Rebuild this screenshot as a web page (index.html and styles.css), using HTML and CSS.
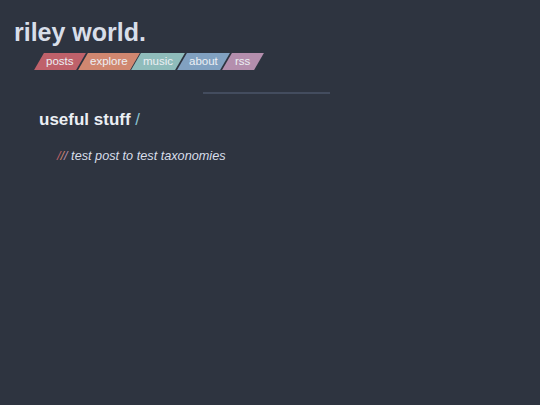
FILE: index.html
```html
<!DOCTYPE html>
<html>
<head>
<meta charset="utf-8">
<link rel="stylesheet" href="styles.css">
</head>
<body>
<header class="header">
  <h1 class="title">riley world.</h1>
  <nav class="nav">
    <a class="tab tab-red"><span class="tab-label">posts</span></a>
    <a class="tab tab-orange"><span class="tab-label">explore</span></a>
    <a class="tab tab-teal"><span class="tab-label">music</span></a>
    <a class="tab tab-blue"><span class="tab-label">about</span></a>
    <a class="tab tab-purple"><span class="tab-label">rss</span></a>
  </nav>
</header>
<main class="main">
  <hr class="rule">
  <h2 class="section">useful stuff <span class="slash">/</span></h2>
  <ul class="posts">
    <li class="post"><span class="s1">/</span><span class="s2">/</span><span class="s3">/</span> test post to test taxonomies</li>
  </ul>
</main>
</body>
</html>
```
FILE: styles.css
```css
html, body {
  margin: 0;
  padding: 0;
  background: #2e3440;
  color: #d8dee9;
  font-family: "Liberation Sans", Arial, sans-serif;
  height: 100%;
}
.header {
  padding: 18px 0 0 14px;
}
.title {
  margin: 0;
  font-size: 25px;
  line-height: 28px;
  font-weight: bold;
  color: #d8dee9;
}
.nav {
  display: flex;
  margin: 7px 0 0 25px;
  gap: 2px;
}
.tab {
  display: block;
  height: 17px;
  line-height: 17px;
  font-size: 11.5px;
  color: #eceff4;
  padding: 0 7px;
  transform: skewX(-30deg);
}
.tab-label {
  display: inline-block;
  transform: skewX(30deg);
}
.tab-red { background: #bf616a; }
.tab-orange { background: #d08770; }
.tab-teal { background: #8fbcbb; }
.tab-blue { background: #81a1c1; }
.tab-purple { background: #b48ead; padding: 0 9px 0 8px; }
.main {
  padding: 0 0 0 39px;
}
.rule {
  width: 127px;
  margin: 22px 0 0 164px;
  border: 0;
  height: 2px;
  background: #434c5e;
}
.section {
  margin: 16px 0 0 0;
  font-size: 17px;
  line-height: 20px;
  font-weight: bold;
  color: #eceff4;
}
.slash { color: #88c0d0; font-weight: normal; }
.posts {
  list-style: none;
  margin: 18px 0 0 18px;
  padding: 0;
}
.post {
  font-style: italic;
  font-size: 12.7px;
  line-height: 16px;
  color: #d8dee9;
}
.s1 { color: #bf616a; }
.s2 { color: #d08770; }
.s3 { color: #b48ead; }
```
